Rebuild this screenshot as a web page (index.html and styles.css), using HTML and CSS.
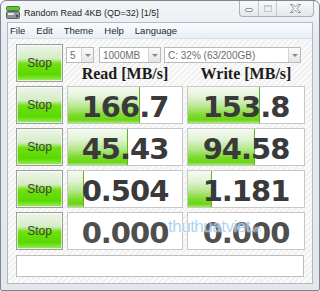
FILE: index.html
```html
<!DOCTYPE html>
<html lang="en">
<head>
  <meta charset="UTF-8">
  <title>Random Read 4KB (QD=32) [1/5]</title>
  <link rel="stylesheet" href="styles.css">
</head>
<body>
  <div class="window">
    <div class="titlebar">
      <svg class="app-icon" width="14" height="13" viewBox="0 0 14 13">
        <rect x="0.5" y="0.5" width="13" height="4" rx="1" fill="#5cc23a" stroke="#3d8a26"/>
        <rect x="0.5" y="5.5" width="13" height="7" rx="1" fill="#8c9197" stroke="#5a5f66"/>
        <rect x="2" y="7" width="6" height="2" fill="#e4e6e8"/>
        <rect x="10" y="9" width="2" height="2" fill="#3c4046"/>
      </svg>
      <span class="title">Random Read 4KB (QD=32) [1/5]</span>
      <div class="controls">
        <span class="ctl min"><i></i></span>
        <span class="ctl max"><i></i></span>
        <span class="ctl close">
          <svg width="11" height="9" viewBox="0 0 11 9">
            <path d="M0.5 0.5h2.5l2.5 2.5 2.5-2.5h2.5l-3.5 4 3.5 4h-2.5l-2.5-2.5-2.5 2.5h-2.5l3.5-4z" fill="#fff" stroke="#8a8f96"/>
          </svg>
        </span>
      </div>
    </div>

    <div class="frame">
      <div class="menubar">
        <span>File</span>
        <span>Edit</span>
        <span>Theme</span>
        <span>Help</span>
        <span>Language</span>
      </div>

      <div class="client">
        <div class="grid">
          <button class="stop">Stop</button>
          <div class="head">
            <div class="combos">
              <div class="combo c-count"><span>5</span><b></b></div>
              <div class="combo c-size"><span>1000MB</span><b></b></div>
              <div class="combo c-drive"><span>C: 32% (63/200GB)</span><b></b></div>
            </div>
            <div class="labels">
              <span>Read [MB/s]</span>
              <span>Write [MB/s]</span>
            </div>
          </div>

          <button class="stop">Stop</button>
          <div class="cell"><div class="bar" style="width: 63%"></div><span>166.7</span></div>
          <div class="cell"><div class="bar" style="width: 62%"></div><span>153.8</span></div>

          <button class="stop">Stop</button>
          <div class="cell"><div class="bar" style="width: 53%"></div><span>45.43</span></div>
          <div class="cell"><div class="bar" style="width: 58%"></div><span>94.58</span></div>

          <button class="stop">Stop</button>
          <div class="cell"><div class="bar" style="width: 14%"></div><span>0.504</span></div>
          <div class="cell"><div class="bar" style="width: 21%"></div><span>1.181</span></div>

          <button class="stop">Stop</button>
          <div class="cell idle"><span>0.000</span></div>
          <div class="cell idle"><span>0.000</span></div>
        </div>

        <div class="status"></div>

        <span class="watermark">thuthuatviet<small>.vn</small></span>
      </div>
    </div>
  </div>
</body>
</html>
```

FILE: styles.css
```css
* {
  box-sizing: border-box;
}

body {
  margin: 0;
  background: #fff;
  font-family: 'Liberation Sans', Arial, sans-serif;
}

.window {
  width: 320px;
  height: 291px;
  border: 1px solid #7d8591;
  border-radius: 6px 6px 2px 2px;
  background: linear-gradient(#f3f5f8, #e6e9ee 40px, #e3e7ec);
  padding: 0 6px 6px;
  display: flex;
  flex-direction: column;
}

/* title bar */
.titlebar {
  height: 21px;
  display: flex;
  align-items: center;
}

.app-icon {
  margin: 1px 0 0 -1px;
}

.title {
  margin-left: 4px;
  margin-top: 2px;
  font-size: 9px;
  color: #1e1e1e;
}

.controls {
  margin-left: auto;
  margin-right: -1px;
  align-self: flex-start;
  display: flex;
  height: 16px;
  border: 1px solid #a9afb7;
  border-top: none;
  border-radius: 0 0 4px 4px;
  background: linear-gradient(#f8f9fb, #e4e7eb);
  overflow: hidden;
}

.ctl {
  display: flex;
  align-items: center;
  justify-content: center;
  height: 100%;
}

.ctl + .ctl {
  border-left: 1px solid #c3c8ce;
}

.min {
  width: 18px;
}

.min i {
  width: 8px;
  height: 4px;
  margin-top: 3px;
  border: 1px solid #8a8f96;
  border-radius: 2px;
  background: #fff;
}

.max {
  width: 18px;
}

.max i {
  width: 8px;
  height: 7px;
  border: 1px solid #c4c8cd;
  border-top-width: 2px;
}

.close {
  width: 37px;
}

/* menu and client area */
.frame {
  flex: 1;
  display: flex;
  flex-direction: column;
  border: 1px solid #b3bac4;
}

.menubar {
  height: 16px;
  display: flex;
  align-items: center;
  background: linear-gradient(#fafbfd, #e9eef6);
  border-bottom: 1px solid #d6deea;
  font-size: 9.5px;
  color: #2a2a2a;
}

.menubar span {
  padding: 0 5px;
  margin-right: 1px;
}

.menubar span:first-child {
  padding-left: 2px;
}

.client {
  flex: 1;
  position: relative;
  padding: 5px 7px 0 8px;
  background: repeating-linear-gradient(135deg, #fbfbfb 0 2px, #f1f1f1 2px 4px);
}

.grid {
  display: grid;
  grid-template-columns: 47px 116px 118px;
  grid-auto-rows: 38px;
  column-gap: 4px;
  row-gap: 4px;
}

.stop {
  margin: 0;
  padding: 0;
  border: 1px solid #9d9d9d;
  box-shadow: inset 0 0 0 1px rgba(255, 255, 255, 0.6);
  background: linear-gradient(#eef5ea 0%, #d4ecc4 38%, #6fe00e 52%, #5ad900 82%, #8ee84c 96%, #c4f0a4 100%);
  font-family: 'Liberation Sans', Arial, sans-serif;
  font-size: 12px;
  color: #3e3e3e;
  cursor: pointer;
}

/* header with combos */
.head {
  grid-column: span 2;
  display: flex;
  flex-direction: column;
}

.combos {
  display: flex;
  margin: 3px 0 0 -1px;
  height: 16px;
}

.combo {
  display: flex;
  align-items: center;
  border: 1px solid #b9b9b9;
  background: #fff;
  font-size: 10px;
  color: #6c6c6c;
  padding-left: 3px;
}

.combo span {
  flex: 1;
}

.combo b {
  width: 12px;
  height: 100%;
  border-left: 1px solid #d3d3d3;
  background: linear-gradient(#fafafa, #e6e6e6);
  position: relative;
}

.combo b::after {
  content: '';
  position: absolute;
  left: 3px;
  top: 6px;
  border: 3px solid transparent;
  border-top-color: #8a8a8a;
}

.c-count {
  width: 28px;
}

.c-size {
  width: 62px;
  margin-left: 5px;
}

.c-drive {
  width: 137px;
  margin-left: 3px;
}

.labels {
  flex: 1;
  display: grid;
  grid-template-columns: 116px 118px;
  column-gap: 4px;
  align-items: end;
  text-align: center;
  font-family: 'Liberation Serif', 'Times New Roman', serif;
  font-weight: bold;
  font-size: 16px;
  line-height: 17px;
  color: #1c1c1c;
}

/* result cells */
.cell {
  position: relative;
  border: 1px solid #c7c7c7;
  background: #fff;
  display: flex;
  align-items: center;
  justify-content: center;
}

.bar {
  position: absolute;
  left: 0;
  top: 0;
  bottom: 0;
  border-right: 1px solid #5fb32a;
  background: linear-gradient(#f6faf3 0%, #e2f3d6 28%, #b6e78e 55%, #7fdb2e 78%, #68d614 92%, #a6ea70 100%);
}

.cell span {
  position: relative;
  margin-top: 4px;
  font-family: 'DejaVu Sans', Verdana, sans-serif;
  font-weight: bold;
  font-size: 29px;
  line-height: 30px;
  letter-spacing: -1px;
  color: #3a3a3a;
}

.cell.idle span {
  color: #4f4f4f;
}

.status {
  margin-top: 5px;
  height: 22px;
  width: 288px;
  border: 1px solid #bdbdbd;
  background: #fff;
}

.watermark {
  position: absolute;
  left: 160px;
  top: 178px;
  font-size: 17px;
  color: rgba(140, 192, 236, 0.7);
  text-shadow: 0 0 2px #fff;
  letter-spacing: -0.5px;
}

.watermark small {
  font-size: 9px;
}
```
